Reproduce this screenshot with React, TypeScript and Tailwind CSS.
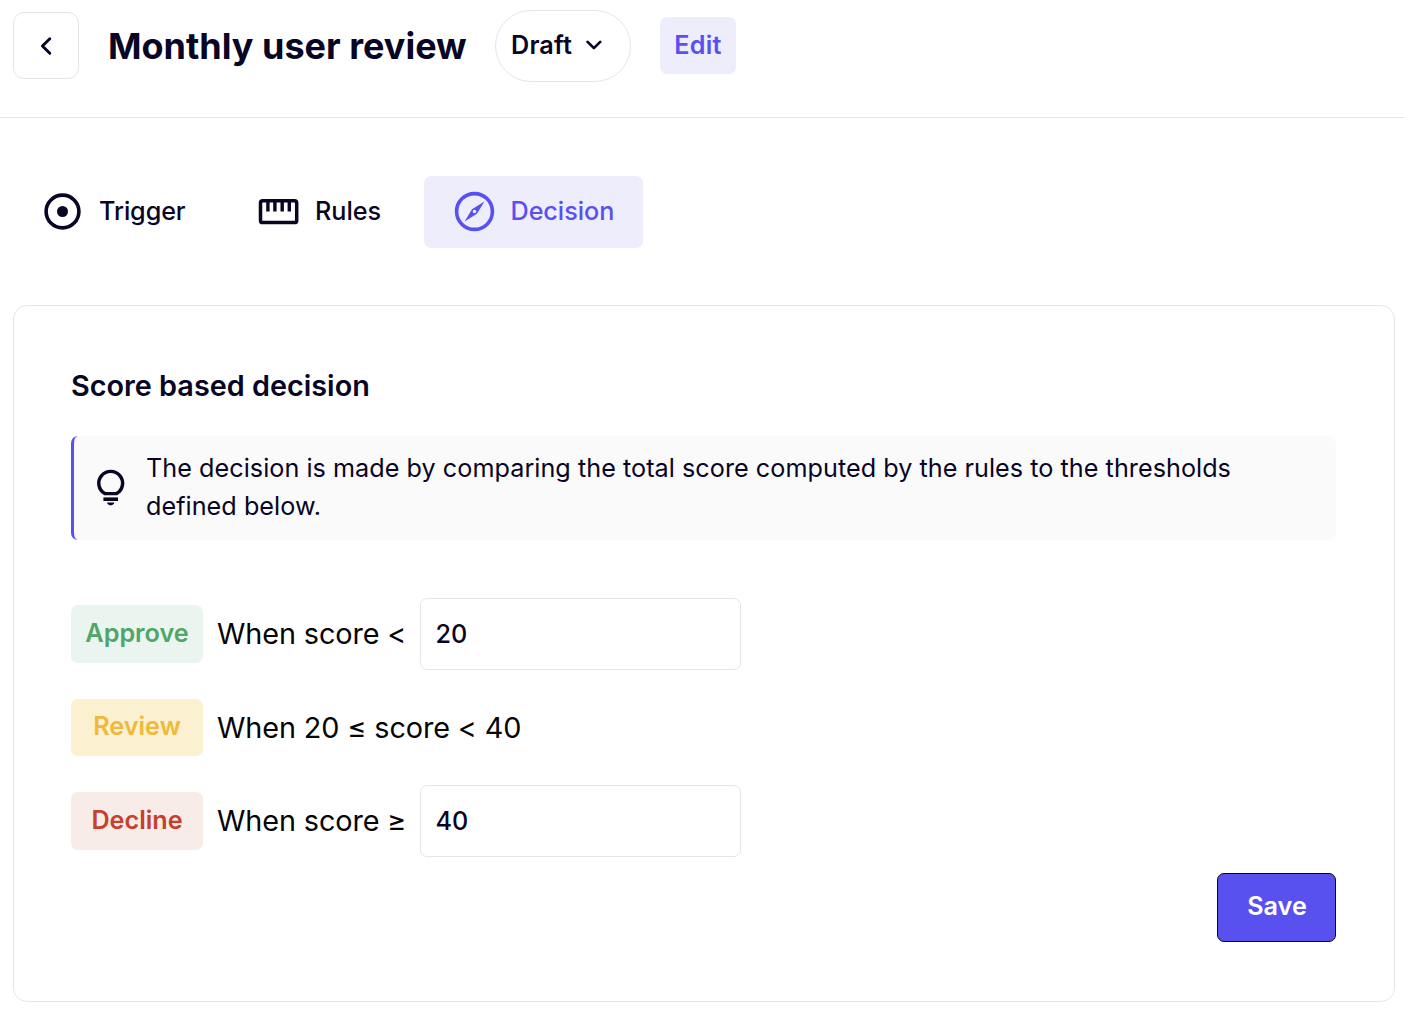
import React from "react";

function Tab({ icon, label, className }: { icon: React.ReactNode; label: string; className: string }) {
  return (
    <div className={"flex h-[72px] items-center rounded-[7px] text-[25.2px] font-medium " + className}>
      <span className="pb-[2px]">{icon}</span>
      <span>{label}</span>
    </div>
  );
}

function Tag({ label, className }: { label: string; className: string }) {
  return (
    <div className={"mr-[14px] flex w-[132px] items-center justify-center rounded-[7px] text-[25.2px] font-semibold " + className}>
      {label}
    </div>
  );
}

function Field({ value }: { value: string }) {
  return (
    <input
      readOnly
      value={value}
      className="h-[72px] w-[321px] rounded-[7px] border border-[#e5e5e5] bg-white px-[14.4px] text-[25.2px] font-medium tracking-normal text-[#080525] outline-none"
    />
  );
}

function TriggerIcon() {
  return (
    <svg className="block" width="37" height="37" viewBox="0 0 37 37">
      <circle cx="18.5" cy="18.5" r="16.4" fill="none" stroke="currentColor" strokeWidth="3.6" />
      <circle cx="18.5" cy="18.5" r="5.5" fill="currentColor" />
    </svg>
  );
}

function RulesIcon() {
  return (
    <svg className="relative top-px block" width="41" height="26" viewBox="0 0 41 26" fill="none" stroke="currentColor" strokeWidth="3.5">
      <rect x="2.5" y="1.8" width="36.2" height="21.8" rx="2.2" />
      <path d="M9.9 3v9.6M16.9 3v9.6M24.2 3v9.6M31.3 3v9.6" strokeWidth="3.4" />
    </svg>
  );
}

function DecisionIcon() {
  return (
    <svg className="block" width="41" height="41" viewBox="0 0 41 41">
      <circle cx="20.5" cy="20.5" r="17.9" fill="none" stroke="currentColor" strokeWidth="3.6" />
      <path fillRule="evenodd" d="M30.4 10.6 23 22.8 10.6 30.4 18 18.2ZM20.5 18.7a1.8 1.8 0 1 0 0 3.6 1.8 1.8 0 0 0 0-3.6Z" fill="currentColor" />
    </svg>
  );
}

function BulbIcon() {
  return (
    <svg width="36" height="38" viewBox="0 0 36 38" fill="none" stroke="currentColor">
      <path d="M12.8 24.6A11.9 11.9 0 1 1 24.6 24.6Z" strokeWidth="3.4" />
      <path d="M11.4 30.2h14.6" strokeWidth="3.6" />
      <path d="M15 33.6h7.4a3.8 3.6 0 0 1-7.4 0Z" fill="currentColor" stroke="none" />
    </svg>
  );
}

export default function App() {
  return (
    <div className="h-[1012px] w-[1404px] overflow-hidden bg-white font-['Inter',sans-serif] text-[#080525]">
      <header className="flex h-[118px] border-b border-[#e5e5e5] pl-[13px]">
        <button className="mt-3 flex h-[67px] w-[66px] items-center justify-center rounded-[11px] border border-[#e5e5e5]">
          <svg width="14" height="20" viewBox="0 0 14 20" fill="none" stroke="currentColor" strokeWidth="2.9" strokeLinecap="round" strokeLinejoin="round"><path d="M10.8 2.7 3.4 10 10.8 17.3" /></svg>
        </button>
        <h1 className="ml-[29px] mt-[19px] w-[387px] whitespace-nowrap text-[36px] leading-[54px] font-bold">Monthly user review</h1>
        <button className="mt-[10px] flex h-[72px] w-[136px] items-center rounded-full border border-[#e5e5e5] pl-[15px] text-[25.2px] font-semibold">
          <span className="tracking-[0.2px]">Draft</span>
          <svg className="mb-[2px] ml-[14px]" width="16" height="12" viewBox="0 0 16 12" fill="none" stroke="currentColor" strokeWidth="2.7" strokeLinecap="round" strokeLinejoin="round"><path d="m1.6 2.9 6.3 6.2 6.3-6.2" /></svg>
        </button>
        <button className="ml-[29px] mt-[17px] h-[57px] w-[76px] rounded-[7px] bg-[#eeedfc] pt-px text-[25.2px] font-semibold tracking-[0.2px] text-[#5950f0]">Edit</button>
      </header>
      <nav className="mt-[58px] flex">
        <Tab label="Trigger" className="ml-[44px] w-[214px] gap-[18px] tracking-[-0.1px]" icon={<TriggerIcon />} />
        <Tab label="Rules" className="w-[166px] gap-[16px]" icon={<RulesIcon />} />
        <Tab label="Decision" className="w-[219px] gap-[15.5px] bg-[#eeedfc] pl-[30px] tracking-[-0.05px] text-[#5950f0]" icon={<DecisionIcon />} />
      </nav>
      <main className="ml-[13px] mt-[57px] h-[697px] w-[1382px] rounded-[14px] border border-[#e5e5e5] px-[57px] pt-[58px]">
        <h2 className="text-[28.8px] leading-[44px] font-semibold">Score based decision</h2>
        <div className="mt-[28px] flex h-[104px] w-[1265px] items-center rounded-[7px] border-l-[3px] border-[#5950f0] bg-[#fafafa] pl-[18px]">
          <BulbIcon />
          <p className="ml-[18px] w-[1140px] pb-[3px] text-[25.2px] leading-[38px] tracking-[0.035px]">The decision is made by comparing the total score computed by the rules to the thresholds defined below.</p>
        </div>
        <div className="mt-[58px] text-[28.8px] text-[#050505]">
          <div className="flex h-[72px] items-center"><Tag label="Approve" className="h-[58px] bg-[#eaf5f0] text-[#50a567]" /><span className="w-[203px] tracking-[-0.1px]">When score &lt;</span><Field value="20" /></div>
          <div className="my-[29px] flex h-[57px] items-center"><Tag label="Review" className="h-[57px] bg-[#fbf0d0] pb-[2px] text-[#efb93b]" /><span className="tracking-[-0.1px]">When 20 ≤ score &lt; 40</span></div>
          <div className="flex h-[72px] items-center"><Tag label="Decline" className="h-[58px] bg-[#f7ece8] text-[#c7402c]" /><span className="w-[203px] tracking-[-0.1px]">When score ≥</span><Field value="40" /></div>
        </div>
        <div className="mt-4 mr-px flex justify-end"><button className="h-[69px] w-[119px] rounded-[7px] border border-[#080525] bg-[#5950f0] pb-[2px] pl-px text-[25.2px] font-semibold text-white">Save</button></div>
      </main>
    </div>
  );
}
